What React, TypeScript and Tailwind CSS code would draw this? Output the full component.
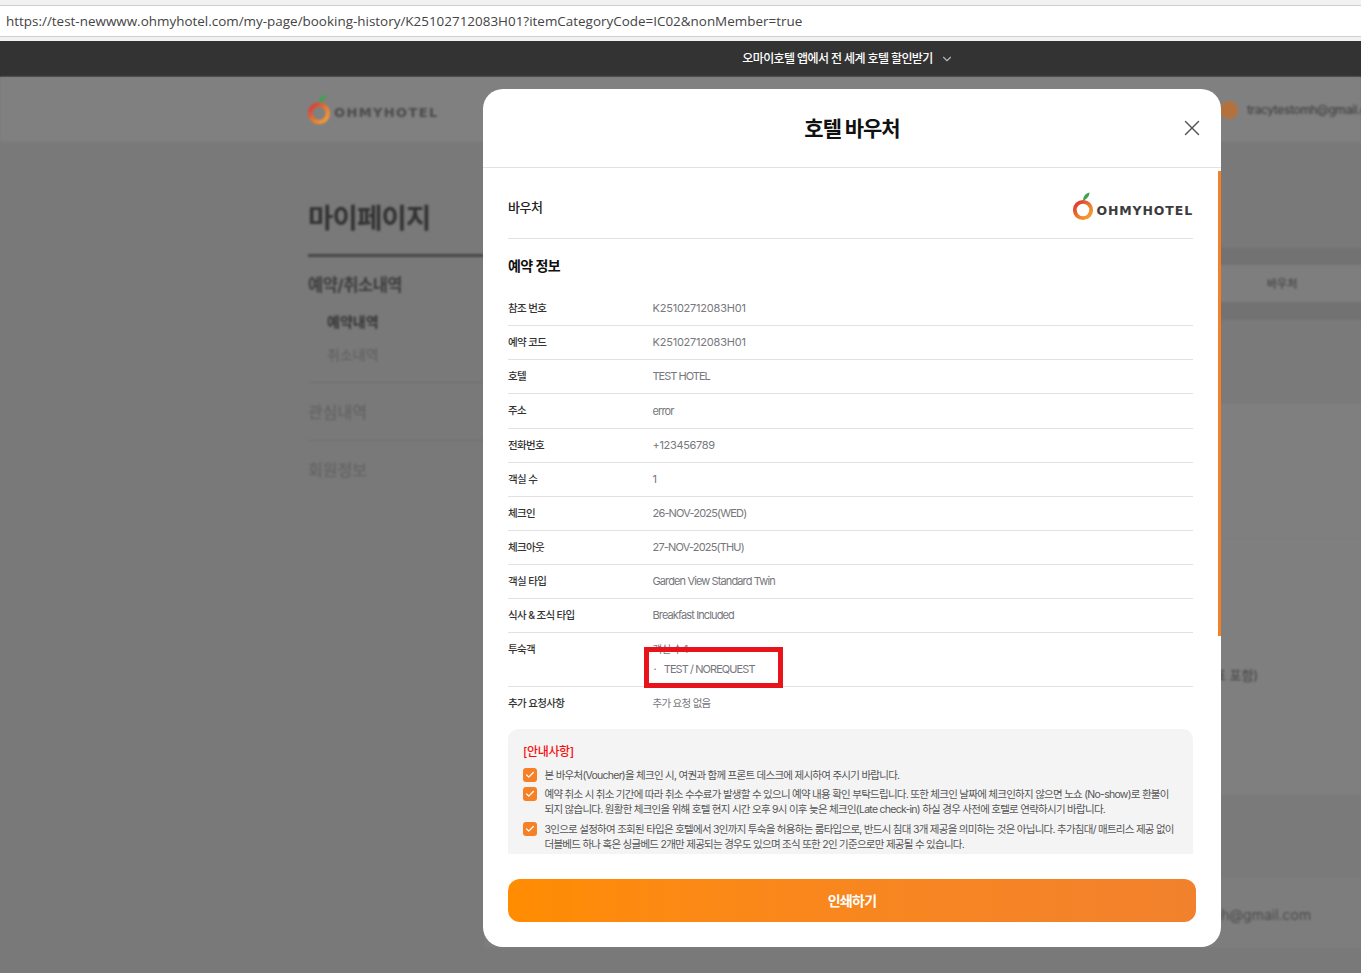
import React from 'react';
import {Check, ChevronDown, X} from 'lucide-react';

const FONT = "font-['Inter','Noto_Sans_CJK_KR',sans-serif]";

const rows = [
    {label: '참조 번호', value: 'K25102712083H01', track: 'tracking-[-0.02em]'},
    {label: '예약 코드', value: 'K25102712083H01', track: 'tracking-[-0.02em]'},
    {label: '호텔', value: 'TEST HOTEL', track: 'tracking-[-0.09em]'},
    {label: '주소', value: 'error', track: 'tracking-[-0.08em]'},
    {label: '전화번호', value: '+123456789', track: 'tracking-[-0.03em]'},
    {label: '객실 수', value: '1', track: 'tracking-[-0.03em]'},
    {label: '체크인', value: '26-NOV-2025(WED)', track: 'tracking-[-0.075em]'},
    {label: '체크아웃', value: '27-NOV-2025(THU)', track: 'tracking-[-0.075em]'},
    {label: '객실 타입', value: 'Garden View Standard Twin', track: 'tracking-[-0.08em]'},
    {label: '식사 & 조식 타입', value: 'Breakfast Included', track: 'tracking-[-0.08em]'},
];

const notes = [
    ['본 바우처(Voucher)을 체크인 시, 여권과 함께 프론트 데스크에 제시하여 주시기 바랍니다.'],
    [
        '예약 취소 시 취소 기간에 따라 취소 수수료가 발생할 수 있으니 예약 내용 확인 부탁드립니다. 또한 체크인 날짜에 체크인하지 않으면 노쇼 (No-show)로 환불이',
        '되지 않습니다. 원활한 체크인을 위해 호텔 현지 시간 오후 9시 이후 늦은 체크인(Late check-in) 하실 경우 사전에 호텔로 연락하시기 바랍니다.',
    ],
    [
        '3인으로 설정하여 조회된 타입은 호텔에서 3인까지 투숙을 허용하는 룸타입으로, 반드시 침대 3개 제공을 의미하는 것은 아닙니다. 추가침대/ 매트리스 제공 없이',
        '더블베드 하나 혹은 싱글베드 2개만 제공되는 경우도 있으며 조식 또한 2인 기준으로만 제공될 수 있습니다.',
    ],
];

const LogoMark = ({className}: {className: string}) => (
    <svg viewBox="0 0 22 29" className={className}>
        <defs>
            <linearGradient id="ring" x1="0" y1="0" x2="1" y2="1">
                <stop offset="0" stopColor="#dc2f34"/>
                <stop offset="0.55" stopColor="#ef7a2a"/>
                <stop offset="1" stopColor="#f6a53a"/>
            </linearGradient>
        </defs>
        <circle cx="11" cy="18" r="8.2" fill="none" stroke="url(#ring)" strokeWidth="3.8"/>
        <path d="M11 9 C11 5 13 1.5 17.5 0.5 C17.5 4 15 7 11 9 Z" fill="#3fa34d"/>
    </svg>
);

const App = () => {
    return (
        <div className={`relative h-[973px] w-[1361px] overflow-hidden bg-[#797979] ${FONT}`}>
            {/* 브라우저 주소창 */}
            <div className="h-[41px] bg-[#f1f1f1] pt-[5px]">
                <div
                    className="flex h-[32px] items-center border-y border-[#cfcfcf] bg-white pl-[6px] font-['Open_Sans',sans-serif] text-[13.45px] text-[#444]">
                    https://test-newwww.ohmyhotel.com/my-page/booking-history/K25102712083H01?itemCategoryCode=IC02&amp;nonMember=true
                </div>
            </div>

            {/* 앱 배너 */}
            <div className="flex h-[36px] items-center justify-center bg-[#333] pl-[335px]">
                <span className="text-[12px] font-medium tracking-[-0.05em] text-white">오마이호텔 앱에서 전 세계 호텔 할인받기</span>
                <ChevronDown size={14} className="ml-[7px] text-[#b5b5b5]"/>
            </div>

            {/* 모달 뒤 페이지 */}
            <div className="blur-[1.2px]">
                <div className="flex h-[65px] items-center bg-[#808080] pl-[307px]">
                    <div className="flex w-[913px] shrink-0 items-center">
                        <LogoMark className="h-[31px] w-[24px]"/>
                        <span
                            className="ml-[3px] mt-[7px] font-['DejaVu_Sans',sans-serif] text-[13px] font-bold tracking-[0.105em] text-[#4a4a4a]">OHMYHOTEL</span>
                    </div>
                    <div className="h-[18px] w-[18px] shrink-0 rounded-full bg-[#b5713c]"/>
                    <span className="ml-[9px] shrink-0 text-[12px] font-medium tracking-[-0.04em] text-[#444]">tracytestomh@gmail.com</span>
                </div>

                <div className="flex pl-[308px]">
                    <div className="w-[176px] shrink-0">
                        <div className="flex h-[115px] items-end border-b-[3px] border-[#484848] pb-[16px]">
                            <h1 className="text-[27.5px] font-bold leading-[40px] tracking-[-0.03em] text-[#333]">마이페이지</h1>
                        </div>
                        <div className="border-b border-[#707070] pb-[17px] pt-[18px]">
                            <p className="text-[16.5px] font-bold leading-[20px] tracking-[-0.03em] text-[#3d3d3d]">예약/취소내역</p>
                            <p className="ml-[19px] mt-[17px] text-[14px] font-bold leading-[20px] text-[#333]">예약내역</p>
                            <p className="ml-[19px] mt-[13px] text-[14px] leading-[20px] text-[#5e5e5e]">취소내역</p>
                        </div>
                        <p className="border-b border-[#707070] pb-[18px] pt-[19px] text-[16px] leading-[20px] text-[#5e5e5e]">관심내역</p>
                        <p className="py-[19px] text-[16px] leading-[20px] text-[#5e5e5e]">회원정보</p>
                    </div>

                    <div className="w-[878px] shrink-0 pt-[106px]">
                        <div className="h-[17px] bg-[#727272]"/>
                        <div className="flex h-[37px] items-center bg-[#7e7e7e] pl-[783px] pt-[2px] text-[11px] font-medium text-[#444]">바우처</div>
                        <div className="h-[18px] bg-[#727272]"/>
                        <div className="h-[83px] bg-[#7a7a7a]"/>
                        <div className="h-[135px] border-t border-[#7c7c7c] bg-[#7f7f7f]"/>
                        <div className="flex h-[257px] items-start border-t border-[#7c7c7c] bg-[#7f7f7f] pl-[730px] pt-[127px] text-[13px] font-medium text-[#4a4a4a]">
                            표 포함)
                        </div>
                        <div className="h-[83px] bg-[#7a7a7a]"/>
                        <div className="flex h-[70px] items-center bg-[#7d7d7d] pl-[729px] pt-[3px] text-[14px] text-[#4a4a4a]">
                            nh@gmail.com
                        </div>
                    </div>
                </div>
            </div>

            {/* 호텔 바우처 모달 */}
            <div className="absolute left-[483px] top-[89px] flex h-[858px] w-[738px] flex-col overflow-hidden rounded-[20px] bg-white">
                <div className="relative flex h-[79px] shrink-0 items-center justify-center border-b border-[#e2e2e2] pt-[1px]">
                    <h2 className="text-[21px] font-bold tracking-[-0.05em] text-[#111]">호텔 바우처</h2>
                    <X size={26} strokeWidth={1.3} className="absolute right-[16px] top-[26px] text-[#555]"/>
                </div>

                <div className="relative h-[686px] shrink-0 overflow-hidden pl-[25px] pr-[28px]">
                    {/* 스크롤바 */}
                    <div className="absolute right-0 top-[3px] h-[465px] w-[3px] bg-[#f58025]"/>

                    <div className="flex h-[71px] items-center justify-between border-b border-[#e2e2e2] pt-[10px]">
                        <span className="text-[13px] font-medium tracking-[-0.04em] text-[#222]">바우처</span>
                        <div className="flex items-end pb-[4px]">
                            <LogoMark className="h-[29px] w-[22px]"/>
                            <span
                                className="mb-[2px] ml-[2px] font-['DejaVu_Sans',sans-serif] text-[12.5px] font-bold leading-[16px] tracking-[0.07em] text-[#3c3c3c]">OHMYHOTEL</span>
                        </div>
                    </div>

                    <h3 className="mt-[17px] h-[36px] text-[14px] font-bold leading-[20px] tracking-[-0.04em] text-[#111]">예약 정보</h3>

                    {rows.map(({label, value, track}, i) => (
                        <div key={label} className={`flex items-center border-b border-[#e2e2e2] ${i === 3 ? 'h-[35px]' : 'h-[34px]'}`}>
                            <span className="w-[144.5px] shrink-0 text-[10.5px] font-medium tracking-[-0.063em] text-[#333]">{label}</span>
                            <span className={`text-[11px] text-[#77777c] ${track}`}>{value}</span>
                        </div>
                    ))}

                    <div className="flex h-[54px] border-b border-[#e2e2e2] pt-[8px] leading-[17px]">
                        <span className="w-[144.5px] shrink-0 text-[10.5px] font-medium tracking-[-0.063em] text-[#333]">투숙객</span>
                        <div className="text-[11px] tracking-[-0.085em] text-[#77777c]">
                            <p className="text-[10.5px] tracking-[-0.063em]">객실 수 1</p>
                            <p className="mt-[3px]"><span className="mr-[8px] ml-[1px]">·</span>TEST / NOREQUEST</p>
                        </div>
                    </div>

                    <div className="flex h-[34px] items-center">
                        <span className="w-[144.5px] shrink-0 text-[10.5px] font-medium tracking-[-0.063em] text-[#333]">추가 요청사항</span>
                        <span className="text-[10.5px] tracking-[-0.07em] text-[#77777c]">추가 요청 없음</span>
                    </div>

                    <div className="mt-[8px] rounded-[10px] bg-[#f4f4f4] px-[15px] pb-[20px] pt-[14px]">
                        <p className="text-[12px] font-medium leading-[18px] tracking-[-0.03em] text-[#f50f0f]">[안내사항]</p>
                        <ul className="mt-[7px] flex flex-col gap-[4.4px]">
                            {notes.map((lines, i) => (
                                <li key={i} className="flex gap-[7.5px]">
                                    <span className="flex h-[14px] w-[14px] shrink-0 items-center justify-center rounded-[3px] bg-[#f58025]">
                                        <Check size={10} strokeWidth={3} className="text-white"/>
                                    </span>
                                    <div className="whitespace-nowrap text-[10.5px] leading-[15px] tracking-[-0.07em] text-[#555]">
                                        {lines.map((line) => <p key={line}>{line}</p>)}
                                    </div>
                                </li>
                            ))}
                        </ul>
                    </div>
                </div>

                <div className="px-[25px] pt-[25px]">
                    <button
                        className="flex h-[43px] w-[688px] items-center justify-center rounded-[12px] bg-gradient-to-r from-[#ff8c00] to-[#f2812d] text-[14px] font-bold tracking-[-0.05em] text-white">
                        인쇄하기
                    </button>
                </div>
            </div>

            {/* 빨간 표시 박스 */}
            <div className="absolute left-[644px] top-[647px] h-[41px] w-[139px] border-[5px] border-[#e8141c]"/>
        </div>
    );
};

export default App;
